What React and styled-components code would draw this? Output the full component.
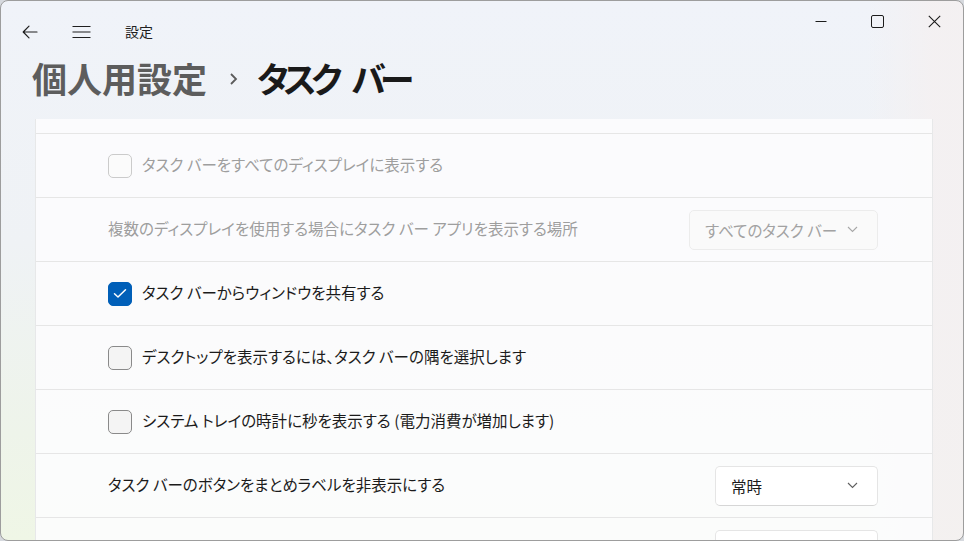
import React from 'react';
import styled, { createGlobalStyle } from 'styled-components';

const GlobalStyle = createGlobalStyle`
  html, body {
    margin: 0;
    padding: 0;
    background: #d6d9de;
  }
  body {
    font-family: "Noto Sans CJK JP", "Noto Sans", "Liberation Sans", sans-serif;
    font-feature-settings: "palt";
    -webkit-font-smoothing: antialiased;
  }
  * {
    box-sizing: border-box;
  }
`;

const Window = styled.div`
  width: 964px;
  height: 541px;
  border: 1px solid #9d9d9d;
  border-radius: 8px;
  overflow: hidden;
  display: flex;
  flex-direction: column;
  background:
    linear-gradient(90deg, rgba(236, 242, 250, 0.0) 0%, rgba(244, 241, 242, 0.0) 90%, rgba(244, 240, 241, 0.9) 97%),
    linear-gradient(180deg, #f0f3f9 0%, #eff2f5 45%, #eef4ea 80%, #eff6e6 100%);
`;

const TitleBar = styled.div`
  height: 54px;
  display: flex;
  align-items: flex-start;
  justify-content: space-between;
  flex-shrink: 0;
`;

const NavGroup = styled.div`
  display: flex;
  align-items: center;
  height: 40px;
  margin-top: 11px;
  padding-left: 9px;
  gap: 11px;
`;

const NavButton = styled.button`
  width: 40px;
  height: 40px;
  border: none;
  background: transparent;
  padding: 0;
  display: flex;
  align-items: center;
  justify-content: center;
  color: #1f1f1f;
`;

const AppName = styled.span`
  font-size: 14px;
  line-height: 20px;
  color: #1f1f1f;
  margin: -3px 0 0 13px;
`;

const Controls = styled.div`
  display: flex;
`;

const ControlButton = styled.button`
  width: 57px;
  height: 40px;
  border: none;
  background: transparent;
  padding: 0;
  display: flex;
  align-items: center;
  justify-content: center;
  color: #1c1c1c;
`;

const Header = styled.div`
  height: 64px;
  padding: 0 0 18px 31px;
  display: flex;
  align-items: center;
  flex-shrink: 0;
`;

const Crumb = styled.span`
  font-size: 35px;
  font-weight: 600;
  line-height: 44px;
  white-space: pre;
  color: ${p => (p.$current ? '#1a1a1a' : '#5d5d5d')};
  letter-spacing: ${p => (p.$current ? '-5.5px' : '0')};
  word-spacing: ${p => (p.$current ? '12px' : '0')};
`;

const CrumbSep = styled.span`
  display: flex;
  align-items: center;
  margin: 2px 19px 0 22px;
`;

const Viewport = styled.div`
  flex: 1;
  overflow: hidden;
  margin: 0 30px 0 34px;
`;

const Panel = styled.div`
  margin-top: -49px;
  border-left: 1px solid #e7e8e9;
  border-right: 1px solid #e7e8e9;
  background: rgba(252, 252, 253, 0.92);
`;

const Row = styled.div`
  height: 64px;
  border-bottom: 1px solid #e6e6e6;
  padding: 0 54px 0 72px;
  display: flex;
  align-items: center;
  gap: 16px;
`;

const Label = styled.span`
  font-size: 15.5px;
  line-height: 20px;
  margin-top: -3px;
  color: ${p => (p.$disabled ? '#9e9e9e' : '#1b1b1b')};
  white-space: nowrap;
`;

const CheckLine = styled.label`
  display: flex;
  align-items: center;
  gap: 10px;
`;

const Box = styled.span`
  width: 24px;
  height: 24px;
  border-radius: 5px;
  flex-shrink: 0;
  display: flex;
  align-items: center;
  justify-content: center;
  border: 1px solid ${p => (p.$checked ? '#005fb8' : p.$disabled ? '#cbcbcb' : '#8a8a8a')};
  background: ${p => (p.$checked ? '#005fb8' : p.$disabled ? '#fbfbfb' : '#f4f4f4')};
`;

const Select = styled.div`
  width: ${p => p.$width}px;
  height: 40px;
  margin-left: auto;
  border-radius: 5px;
  border: 1px solid ${p => (p.$disabled ? '#ececec' : '#e5e5e5')};
  border-bottom-color: ${p => (p.$disabled ? '#ececec' : '#d6d6d6')};
  background: ${p => (p.$disabled ? '#fafafa' : '#ffffff')};
  color: ${p => (p.$disabled ? '#a2a2a2' : '#1b1b1b')};
  padding: 0 19px 0 15px;
  display: flex;
  align-items: center;
  justify-content: space-between;
  font-size: 15.5px;
  flex-shrink: 0;
`;

const Chevron = ({ color = '#5f5f5f' }) => (
  <svg width="11" height="7" viewBox="0 0 11 7">
    <polyline points="1,1 5.5,5.5 10,1" fill="none" stroke={color} strokeWidth="1.1" />
  </svg>
);

const Checkbox = ({ checked, disabled, children }) => (
  <CheckLine>
    <Box $checked={checked} $disabled={disabled}>
      {checked && (
        <svg width="14" height="11" viewBox="0 0 14 11">
          <polyline points="1.5,5.8 5,9 12.5,1.8" fill="none" stroke="#ffffff" strokeWidth="1.5" strokeLinecap="round" strokeLinejoin="round" />
        </svg>
      )}
    </Box>
    <Label $disabled={disabled}>{children}</Label>
  </CheckLine>
);

const Dropdown = ({ value, width, disabled }) => (
  <Select $width={width} $disabled={disabled}>
    <span>{value}</span>
    <Chevron color={disabled ? '#a8a8a8' : '#5f5f5f'} />
  </Select>
);

export default function App() {
  return (
    <>
      <GlobalStyle />
      <Window>
        <TitleBar>
          <NavGroup>
            <NavButton aria-label="戻る">
              <svg width="16" height="14" viewBox="0 0 16 14">
                <path d="M15 7H1.5M7 1.2L1.2 7 7 12.8" fill="none" stroke="#1f1f1f" strokeWidth="1.2" strokeLinecap="round" strokeLinejoin="round" />
              </svg>
            </NavButton>
            <NavButton aria-label="メニュー">
              <svg width="19" height="14" viewBox="0 0 19 14">
                <path d="M0.5 1.5H18.5M0.5 7H18.5M0.5 12.5H18.5" fill="none" stroke="#1f1f1f" strokeWidth="1.2" />
              </svg>
            </NavButton>
            <AppName>設定</AppName>
          </NavGroup>
          <Controls>
            <ControlButton aria-label="最小化">
              <svg width="12" height="12" viewBox="0 0 12 12">
                <path d="M0.5 6.5H11.5" stroke="#1c1c1c" strokeWidth="1" />
              </svg>
            </ControlButton>
            <ControlButton aria-label="最大化">
              <svg width="13" height="13" viewBox="0 0 13 13">
                <rect x="0.5" y="0.5" width="12" height="12" rx="1.5" fill="none" stroke="#1c1c1c" strokeWidth="1" />
              </svg>
            </ControlButton>
            <ControlButton aria-label="閉じる">
              <svg width="13" height="13" viewBox="0 0 13 13">
                <path d="M0.8 0.8L12.2 12.2M12.2 0.8L0.8 12.2" stroke="#1c1c1c" strokeWidth="1.1" />
              </svg>
            </ControlButton>
          </Controls>
        </TitleBar>

        <Header>
          <Crumb>個人用設定</Crumb>
          <CrumbSep>
            <svg width="9" height="14" viewBox="0 0 9 14">
              <polyline points="2,2 7,7 2,12" fill="none" stroke="#5b5b5b" strokeWidth="1.8" />
            </svg>
          </CrumbSep>
          <Crumb $current>タスク バー</Crumb>
        </Header>

        <Viewport>
          <Panel>
            <Row />
            <Row>
              <Checkbox disabled>タスク バーをすべてのディスプレイに表示する</Checkbox>
            </Row>
            <Row>
              <Label $disabled>複数のディスプレイを使用する場合にタスク バー アプリを表示する場所</Label>
              <Dropdown value="すべてのタスク バー" width={189} disabled />
            </Row>
            <Row>
              <Checkbox checked>タスク バーからウィンドウを共有する</Checkbox>
            </Row>
            <Row>
              <Checkbox>デスクトップを表示するには、タスク バーの隅を選択します</Checkbox>
            </Row>
            <Row>
              <Checkbox>システム トレイの時計に秒を表示する (電力消費が増加します)</Checkbox>
            </Row>
            <Row>
              <Label>タスク バーのボタンをまとめラベルを非表示にする</Label>
              <Dropdown value="常時" width={163} />
            </Row>
            <Row>
              <Dropdown value="" width={163} />
            </Row>
          </Panel>
        </Viewport>
      </Window>
    </>
  );
}
